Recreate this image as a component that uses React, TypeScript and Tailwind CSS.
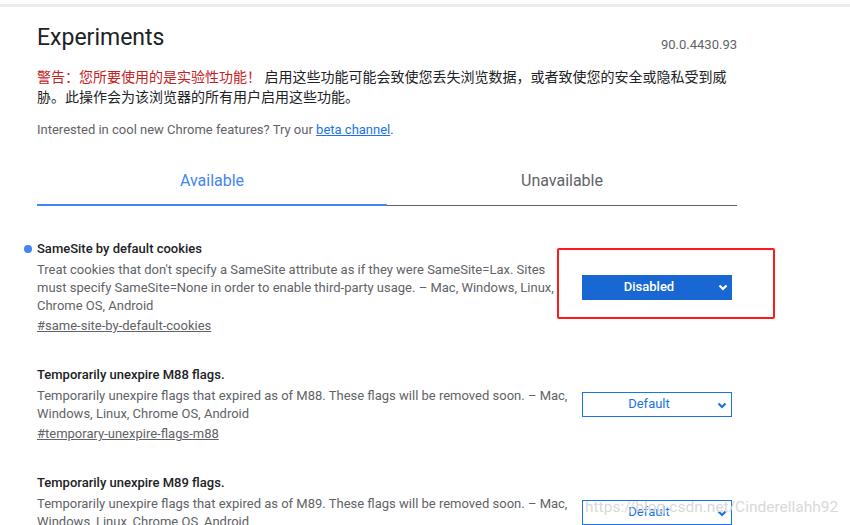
const font = { fontFamily: 'Roboto, "Noto Sans CJK SC", sans-serif' };

interface Flag {
  title: string;
  desc: string;
  tag: string;
  value: string;
  enabled?: boolean;
  highlighted?: boolean;
}

const flags: Flag[] = [
  {
    title: "SameSite by default cookies",
    desc: "Treat cookies that don't specify a SameSite attribute as if they were SameSite=Lax. Sites must specify SameSite=None in order to enable third-party usage. – Mac, Windows, Linux, Chrome OS, Android",
    tag: "#same-site-by-default-cookies",
    value: "Disabled",
    enabled: true,
    highlighted: true,
  },
  {
    title: "Temporarily unexpire M88 flags.",
    desc: "Temporarily unexpire flags that expired as of M88. These flags will be removed soon. – Mac, Windows, Linux, Chrome OS, Android",
    tag: "#temporary-unexpire-flags-m88",
    value: "Default",
  },
  {
    title: "Temporarily unexpire M89 flags.",
    desc: "Temporarily unexpire flags that expired as of M89. These flags will be removed soon. – Mac, Windows, Linux, Chrome OS, Android",
    tag: "#temporary-unexpire-flags-m89",
    value: "Default",
  },
];

function Chevron({ className }: { className: string }) {
  return (
    <svg width="10" height="7" viewBox="0 0 10 7" className={className}>
      <polyline
        points="1.5,1.5 5,5 8.5,1.5"
        fill="none"
        stroke="currentColor"
        strokeWidth="2.2"
      />
    </svg>
  );
}

function FlagSelect({ flag }: { flag: Flag }) {
  const active = flag.enabled;
  return (
    <div className="relative">
      <div
        className={
          active
            ? "relative flex h-[25px] w-[150px] items-center bg-[#1967d2] pl-2 pr-6 text-[13px] font-medium text-white"
            : "relative flex h-[25px] w-[150px] items-center border border-[#1a73e8] bg-white pl-2 pr-6 text-[13px] text-[#1a73e8]"
        }
      >
        <span className="flex-1 text-center">{flag.value}</span>
        <Chevron className="absolute right-[4px] top-[9px]" />
      </div>
      {flag.highlighted && (
        <div className="absolute left-[-25px] top-[-27px] h-[71px] w-[218px] rounded-[2px] border-2 border-[#ff1a1a]" />
      )}
    </div>
  );
}

function FlagRow({ flag }: { flag: Flag }) {
  return (
    <div className="flex items-center gap-[10px] py-[15px]">
      <div className="relative w-[535px]">
        {flag.enabled && (
          <span className="absolute left-[-13px] top-[6px] size-2 rounded-full bg-[#4285f4]" />
        )}
        <h3 className="text-[13px] font-medium leading-5 text-[#202124]">
          {flag.title}
        </h3>
        <p className="mt-[2px] text-[13px] leading-[18px] text-[#5f6368]">
          {flag.desc}
        </p>
        <a className="mt-[2px] block text-[13px] leading-[18px] text-[#5f6368] underline">
          {flag.tag}
        </a>
      </div>
      <FlagSelect flag={flag} />
    </div>
  );
}

export default function App() {
  return (
    <div style={font} className="relative h-[525px] w-[850px] overflow-hidden bg-white">
      <div className="mt-[4px] h-[3px] bg-[#ececec]" />
      <main className="ml-[37px] w-[700px]">
        <header className="mt-[15px] flex items-start justify-between">
          <h1 className="text-[23px] leading-8 text-[#202124]">Experiments</h1>
          <span className="mt-[15px] text-[13px] leading-4 text-[#5f6368]">
            90.0.4430.93
          </span>
        </header>

        <p className="mt-[13px] text-[14px] leading-5 text-[#202124]">
          <span className="text-[#c5221f]">警告：您所要使用的是实验性功能！</span>
          {" "}启用这些功能可能会致使您丢失浏览数据，或者致使您的安全或隐私受到威胁。此操作会为该浏览器的所有用户启用这些功能。
        </p>

        <p className="mt-[13px] text-[13px] leading-5 text-[#5f6368]">
          Interested in cool new Chrome features? Try our{" "}
          <a className="text-[#1a73e8] underline">beta channel</a>.
        </p>

        <nav className="mt-[29px] flex items-end">
          <div className="w-[350px] border-b-2 border-[#4285f4] pb-[11px] text-center text-[16px] leading-6 text-[#4285f4]">
            Available
          </div>
          <div className="w-[350px] border-b border-[#5f6368] pb-[12px] text-center text-[16px] leading-6 text-[#5f6368]">
            Unavailable
          </div>
        </nav>

        <section className="mt-[18px]">
          {flags.map((flag) => (
            <FlagRow key={flag.tag} flag={flag} />
          ))}
        </section>
      </main>

      <span className="pointer-events-none absolute left-[585px] top-[497px] text-[15.5px] leading-5 text-[#d9d9d9]">
        https://blog.csdn.net/Cinderellahh92
      </span>
    </div>
  );
}
